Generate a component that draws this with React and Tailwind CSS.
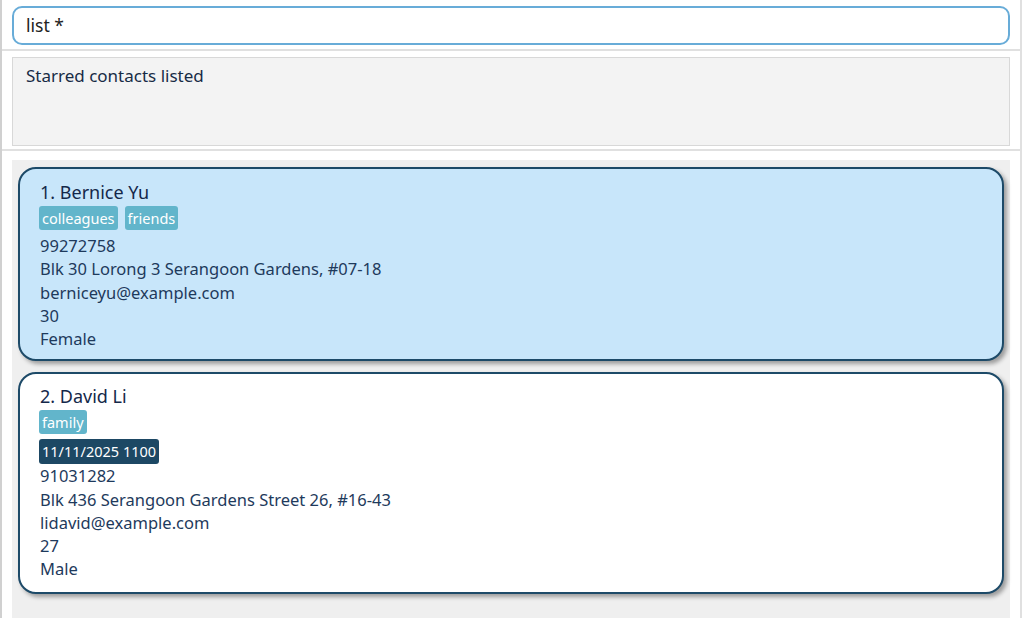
const contacts = [
  {
    id: 1,
    name: 'Bernice Yu',
    tags: ['colleagues', 'friends'],
    phone: '99272758',
    address: 'Blk 30 Lorong 3 Serangoon Gardens, #07-18',
    email: 'berniceyu@example.com',
    age: '30',
    gender: 'Female',
    selected: true,
  },
  {
    id: 2,
    name: 'David Li',
    tags: ['family'],
    meeting: '11/11/2025 1100',
    phone: '91031282',
    address: 'Blk 436 Serangoon Gardens Street 26, #16-43',
    email: 'lidavid@example.com',
    age: '27',
    gender: 'Male',
  },
];

function ContactCard({ index, contact }) {
  return (
    <div
      className={`rounded-[18px] border-2 border-[#1d4a68] pl-[19px] pr-4 shadow-[3px_3px_4px_rgba(0,0,0,0.35)] ${
        contact.selected ? 'bg-[#c8e6fa] pt-[11px] pb-[9px]' : 'bg-white pt-[10px] pb-[11px]'
      }`}
    >
      <div className="pl-[1px] text-[18px] leading-[24px] text-[#14284a]">
        {index}. {contact.name}
      </div>
      <div className="mt-[2px] flex gap-[7px]">
        {contact.tags.map((tag) => (
          <span
            key={tag}
            className="h-[24px] rounded-[3px] bg-[#62b5cb] px-[3px] text-[14.5px] leading-[24px] text-white"
          >
            {tag}
          </span>
        ))}
      </div>
      {contact.meeting && (
        <div className="mt-[5px] flex">
          <span className="h-[25px] rounded-[3px] bg-[#1d4864] px-[3px] text-[14.5px] leading-[25px] text-white">
            {contact.meeting}
          </span>
        </div>
      )}
      <div
        className={`${contact.meeting ? 'mt-0' : 'mt-[4px]'} pl-[1px] text-[16.5px] leading-[23.25px] text-[#1e3a5c]`}
      >
        <div>{contact.phone}</div>
        <div>{contact.address}</div>
        <div>{contact.email}</div>
        <div>{contact.age}</div>
        <div>{contact.gender}</div>
      </div>
    </div>
  );
}

export default function App() {
  return (
    <div
      className="flex h-[618px] w-[1022px] overflow-hidden bg-white"
      style={{ fontFamily: '"Segoe UI", "Noto Sans", "Open Sans", sans-serif' }}
    >
      <div className="w-[2px] bg-[#d0d0d0]" />
      <div className="flex flex-1 flex-col">
        <div className="h-[49px] px-[10px] pt-[6px]">
          <div className="flex h-[39px] items-center rounded-[10px] border-2 border-[#68acd8] bg-white px-[12px] text-[17.5px] text-[#222]">
            list *
          </div>
        </div>
        <div className="h-[2px] bg-[#e0e0e0]" />
        <div className="h-[98px] px-[10px] pt-[6px]">
          <div className="h-[89px] border border-[#d8d8d8] bg-[#f3f3f3] px-[13px] pt-[6px] text-[17px] leading-[24px] text-[#172b45]">
            Starred contacts listed
          </div>
        </div>
        <div className="h-[2px] bg-[#e0e0e0]" />
        <div className="flex-1 px-[10px] pt-[9px]">
          <div className="flex h-full flex-col gap-[11px] bg-[#efefef] px-[6px] pt-[7px]">
            {contacts.map((c, i) => (
              <ContactCard key={c.id} index={i + 1} contact={c} />
            ))}
          </div>
        </div>
      </div>
      <div className="w-[2px] bg-[#e0e0e0]" />
    </div>
  );
}
